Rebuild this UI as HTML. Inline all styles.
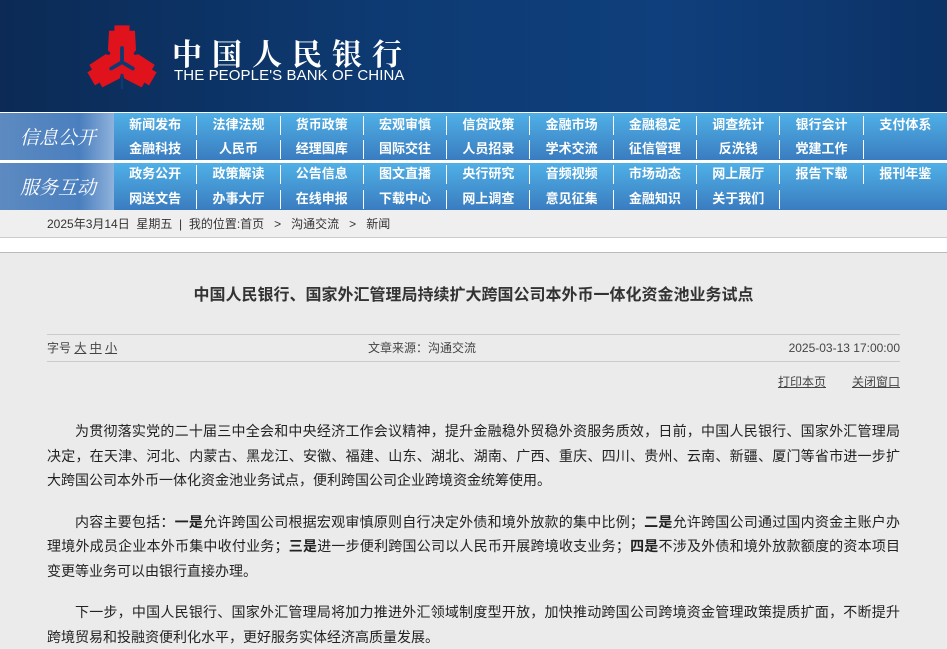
<!DOCTYPE html>
<html><head><meta charset="utf-8"><style>
*{margin:0;padding:0;box-sizing:border-box}
body{width:947px;height:648px;overflow:hidden;background:#ebebeb;font-family:"Liberation Sans","Noto Sans CJK SC",sans-serif;color:#222}
#hd{height:112px;background:linear-gradient(90deg,#0c2a55 0%,#0d3a72 40%,#0f3f7c 70%,#0c3266 100%);position:relative}
#hd .cn{position:absolute;left:172px;top:30px;color:#fff;font-size:30px;font-family:"Noto Serif CJK SC",serif;font-weight:bold;letter-spacing:10px}
#hd .en{position:absolute;left:174px;top:67px;color:#fff;font-size:15px;letter-spacing:0.1px}
#nav{height:98px;position:relative;background:#fff}
.blk{position:absolute;left:0;width:947px;height:47px;background:linear-gradient(#4fb0e6,#3a7cc0)}
.lab{position:absolute;left:0;top:0;width:114px;height:47px;background:linear-gradient(90deg,#5d8ac0,#4a7fbf 70%,#8fb2dc);color:#fff;font-style:italic;font-size:19px;font-family:"Noto Serif CJK SC",serif;line-height:47px;padding-left:20px}
.row{position:absolute;left:114px;height:23px;display:flex}
.row span{width:83.3px;text-align:center;color:#fff;font-weight:bold;font-size:13px;border-right:1px solid #fff;height:19px;margin-top:2px;line-height:18px}
#bc{height:28px;background:#efefef;border-bottom:1px solid #ccc;font-size:12px;color:#333;line-height:28px;padding-left:47px}
#wh{height:15px;background:#fff;border-bottom:1px solid #bbb}
#ct{padding:0 47px}
h1{font-size:16px;font-weight:bold;text-align:center;color:#333;margin-top:33px;height:20px;line-height:20px}
.meta{margin-top:28px;border-top:1px solid #ccc;border-bottom:1px solid #ccc;height:28px;font-size:12px;color:#444;line-height:26px;position:relative}
.meta a{color:#444}
.pr{text-align:right;font-size:12px;margin-top:11px;height:16px}
.pr a{color:#444;text-decoration:underline;margin-left:26px}
.p{font-size:14px;line-height:24.5px;margin-top:17px}
.p div{text-align:justify;text-align-last:justify;white-space:nowrap}
.p div.l{text-align-last:left}
</style></head><body>
<div id="hd">
<svg style="position:absolute;left:82px;top:21px" width="80" height="72" viewBox="-40 -40 80 72">
<defs><polygon id="arm" points="-7,-33 7,-33 7,-28 12,-28 13,-10 6,-2 -6,-2 -13,-10 -12,-28 -7,-28"/></defs>
<g transform="scale(1.08)">
<g fill="#e0121c">
<use href="#arm"/>
<use href="#arm" transform="rotate(120)"/>
<use href="#arm" transform="rotate(240)"/>
<circle r="13"/>
</g>
<g stroke="#0d3a72" stroke-width="3.5" stroke-linecap="round" fill="none">
<line x1="0" y1="1" x2="0" y2="-12"/>
<line x1="0" y1="1" x2="-10" y2="7"/>
<line x1="0" y1="1" x2="10" y2="7"/>
<line x1="0" y1="12" x2="0" y2="26" stroke-width="2.5" stroke-linecap="butt"/>
</g>
</g>
</svg>
<div class="cn">中国人民银行</div>
<div class="en">THE PEOPLE'S BANK OF CHINA</div>
</div>
<div id="nav">
<div class="blk" style="top:1px"><div class="lab">信息公开</div>
<div class="row" style="top:1px"><span>新闻发布</span><span>法律法规</span><span>货币政策</span><span>宏观审慎</span><span>信贷政策</span><span>金融市场</span><span>金融稳定</span><span>调查统计</span><span>银行会计</span><span style="border:0">支付体系</span></div>
<div class="row" style="top:25px"><span>金融科技</span><span>人民币</span><span>经理国库</span><span>国际交往</span><span>人员招录</span><span>学术交流</span><span>征信管理</span><span>反洗钱</span><span>党建工作</span><span style="border:0"></span></div>
</div>
<div class="blk" style="top:51px"><div class="lab">服务互动</div>
<div class="row" style="top:0px"><span>政务公开</span><span>政策解读</span><span>公告信息</span><span>图文直播</span><span>央行研究</span><span>音频视频</span><span>市场动态</span><span>网上展厅</span><span>报告下载</span><span style="border:0">报刊年鉴</span></div>
<div class="row" style="top:25px"><span>网送文告</span><span>办事大厅</span><span>在线申报</span><span>下载中心</span><span>网上调查</span><span>意见征集</span><span>金融知识</span><span>关于我们</span><span style="border:0"></span><span style="border:0"></span></div>
</div>
</div>
<div id="bc">2025年3月14日&nbsp; 星期五 &nbsp;|&nbsp; 我的位置:首页 &nbsp; &gt; &nbsp; 沟通交流 &nbsp; &gt; &nbsp; 新闻</div>
<div id="wh"></div>
<div id="ct">
<h1>中国人民银行、国家外汇管理局持续扩大跨国公司本外币一体化资金池业务试点</h1>
<div class="meta"><span>字号 <a href="#">大</a> <a href="#">中</a> <a href="#">小</a></span><span style="position:absolute;left:321px">文章来源：沟通交流</span><span style="position:absolute;right:0">2025-03-13 17:00:00</span></div>
<div class="pr"><a href="#">打印本页</a><a href="#">关闭窗口</a></div>
<div class="p" style="margin-top:30px">
<div style="padding-left:28px">为贯彻落实党的二十届三中全会和中央经济工作会议精神，提升金融稳外贸稳外资服务质效，日前，中国人民银行、国家外汇管理局</div>
<div>决定，在天津、河北、内蒙古、黑龙江、安徽、福建、山东、湖北、湖南、广西、重庆、四川、贵州、云南、新疆、厦门等省市进一步扩</div>
<div class="l">大跨国公司本外币一体化资金池业务试点，便利跨国公司企业跨境资金统筹使用。</div>
</div>
<div class="p">
<div style="padding-left:28px">内容主要包括：<b>一是</b>允许跨国公司根据宏观审慎原则自行决定外债和境外放款的集中比例；<b>二是</b>允许跨国公司通过国内资金主账户办</div>
<div>理境外成员企业本外币集中收付业务；<b>三是</b>进一步便利跨国公司以人民币开展跨境收支业务；<b>四是</b>不涉及外债和境外放款额度的资本项目</div>
<div class="l">变更等业务可以由银行直接办理。</div>
</div>
<div class="p">
<div style="padding-left:28px">下一步，中国人民银行、国家外汇管理局将加力推进外汇领域制度型开放，加快推动跨国公司跨境资金管理政策提质扩面，不断提升</div>
<div class="l">跨境贸易和投融资便利化水平，更好服务实体经济高质量发展。</div>
</div>
</div>
</body></html>
